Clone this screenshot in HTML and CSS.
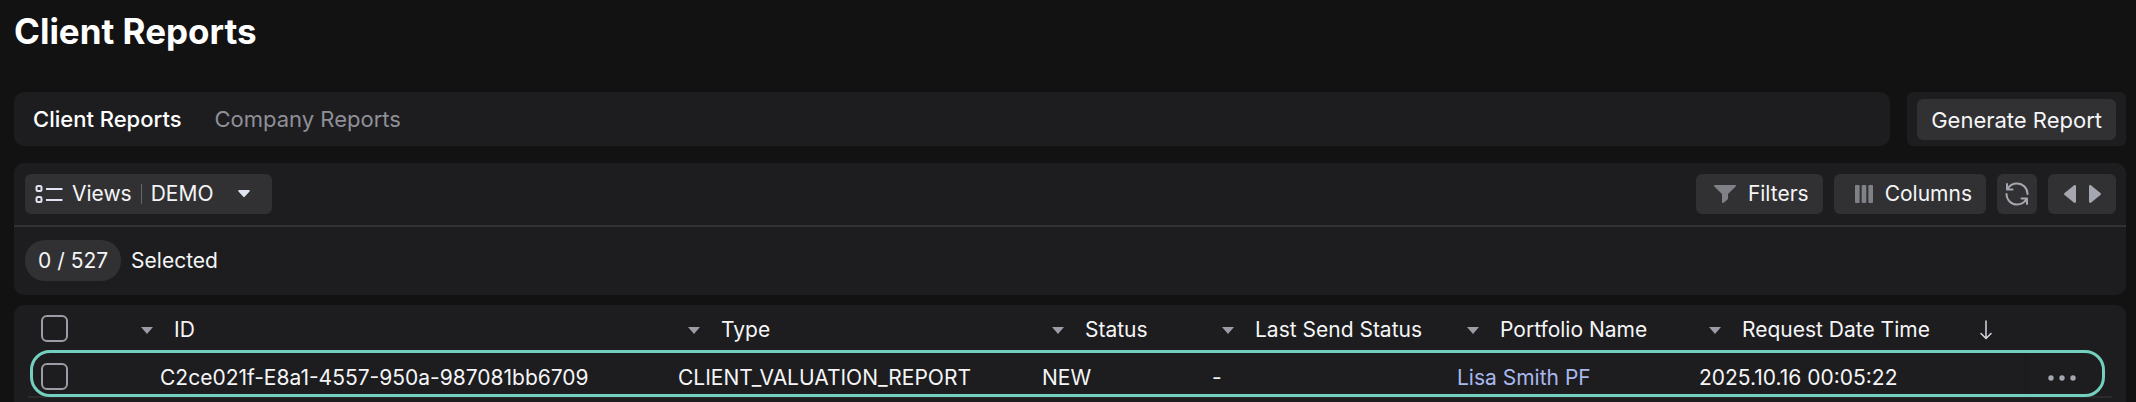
FILE: index.html
```html
<!DOCTYPE html>
<html lang="en">
<head>
  <meta charset="UTF-8">
  <meta name="viewport" content="width=device-width, initial-scale=1.0">
  <title>Client Reports</title>
  <link rel="stylesheet" href="styles.css">
</head>
<body>
  <h1 class="page-title">Client Reports</h1>

  <div class="top-row">
    <nav class="panel tabs">
      <a class="tab active" href="#client">Client Reports</a>
      <a class="tab" href="#company">Company Reports</a>
    </nav>
    <div class="panel generate">
      <button class="btn" type="button">Generate Report</button>
    </div>
  </div>

  <section class="panel controls">
    <div class="toolbar">
      <button class="btn views" type="button">
        <svg class="views-icon" width="28" height="20" viewBox="0 0 28 20" fill="none" stroke="currentColor" stroke-width="2">
          <rect x="1.500" y="2" width="5" height="5" rx="1.500"/>
          <rect x="1.500" y="13" width="5" height="5" rx="1.500"/>
          <path d="M11 5h16.500M11 16h16.500"/>
        </svg>
        <span>Views</span>
        <span class="separator"></span>
        <span>DEMO</span>
        <svg class="views-caret" width="12" height="8" viewBox="0 0 12 8"><path d="M1.2 0h9.6c.9 0 1.3 1 .7 1.600L6.900 6.500a1.200 1.200 0 0 1-1.800 0L.5 1.600C-.1 1 .3 0 1.200 0z" fill="currentColor"/></svg>
      </button>
      <div class="actions">
        <button class="btn filters" type="button">
          <svg width="22" height="18" viewBox="0 0 22 18"><path d="M1 0h20c.9 0 1.300 1 .7 1.600L14 9v4.500c0 .4-.2.700-.5 1l-3.800 3.200c-.6.500-1.700.2-1.700-.7V9L.3 1.600C-.3 1 .1 0 1 0z" fill="currentColor"/></svg>
          <span>Filters</span>
        </button>
        <button class="btn columns" type="button">
          <svg width="18" height="18" viewBox="0 0 18 18" fill="currentColor"><rect width="4.600" height="18" rx="1"/><rect x="6.700" width="4.600" height="18" rx="1"/><rect x="13.400" width="4.600" height="18" rx="1"/></svg>
          <span>Columns</span>
        </button>
        <button class="btn refresh" type="button" aria-label="Refresh">
          <svg width="24" height="24" viewBox="0 0 24 24" fill="none" stroke="currentColor" stroke-width="2" stroke-linecap="round" stroke-linejoin="round">
            <path d="M2 2v5.500h5.500M2.500 7C4.500 3.600 8 1.500 12 1.500c5.800 0 10.500 4.700 10.500 10.500"/>
            <path d="M22 22v-5.500h-5.500M21.500 17c-2 3.400-5.500 5.500-9.500 5.500C6.200 22.500 1.500 17.800 1.500 12"/>
          </svg>
        </button>
        <div class="btn pager">
          <button class="pager-btn" type="button" aria-label="Previous">
            <svg width="12" height="18" viewBox="0 0 12 18"><path d="M12 1.500v15c0 1.300-1.300 1.900-2.200 1L.6 10a1.300 1.300 0 0 1 0-2L9.800.500c.9-.9 2.200-.3 2.200 1z" fill="currentColor"/></svg>
          </button>
          <button class="pager-btn" type="button" aria-label="Next">
            <svg width="12" height="18" viewBox="0 0 12 18"><path d="M0 1.500v15c0 1.300 1.300 1.900 2.200 1L11.400 10a1.300 1.300 0 0 0 0-2L2.200.500C1.300-.400 0 .200 0 1.500z" fill="currentColor"/></svg>
          </button>
        </div>
      </div>
    </div>
    <div class="selection">
      <span class="count">0 / 527</span>
      <span>Selected</span>
    </div>
  </section>

  <section class="panel reports">
    <table class="report-table">
      <colgroup>
        <col class="col-select">
        <col class="col-id">
        <col class="col-type">
        <col class="col-status">
        <col class="col-last">
        <col class="col-portfolio">
        <col class="col-date">
        <col class="col-actions">
      </colgroup>
      <thead>
        <tr>
          <th class="select"><input class="check" type="checkbox" aria-label="Select all"></th>
          <th><div class="head"><span class="caret"></span>ID</div></th>
          <th><div class="head"><span class="caret"></span>Type</div></th>
          <th><div class="head"><span class="caret"></span>Status</div></th>
          <th><div class="head"><span class="caret"></span>Last Send Status</div></th>
          <th><div class="head"><span class="caret"></span>Portfolio Name</div></th>
          <th>
            <div class="head">
              <span class="caret"></span>Request Date Time
              <svg class="sort" width="12" height="20" viewBox="0 0 12 20" fill="none" stroke="currentColor" stroke-width="1.500" stroke-linecap="round" stroke-linejoin="round"><path d="M6 1v17M1 13.500l5 5 5-5"/></svg>
            </div>
          </th>
          <th></th>
        </tr>
      </thead>
      <tbody>
        <tr class="highlighted">
          <td class="select"><input class="check" type="checkbox" aria-label="Select report"></td>
          <td class="id">C2ce021f-E8a1-4557-950a-987081bb6709</td>
          <td>CLIENT_VALUATION_REPORT</td>
          <td>NEW</td>
          <td>-</td>
          <td><a class="portfolio" href="#portfolio">Lisa Smith PF</a></td>
          <td>2025.10.16 00:05:22</td>
          <td class="more">
            <button class="more-btn" type="button" aria-label="More actions">
              <svg width="28" height="6" viewBox="0 0 28 6" fill="currentColor"><circle cx="3" cy="3" r="2.700"/><circle cx="14" cy="3" r="2.700"/><circle cx="25" cy="3" r="2.700"/></svg>
            </button>
          </td>
        </tr>
      </tbody>
    </table>
  </section>
</body>
</html>
```
FILE: styles.css
```css
* {
  box-sizing: border-box;
}
body {
  background-color: #121212;
  color: #f5f5f7;
  font-family: Inter, 'Liberation Sans', sans-serif;
  font-size: 21px;
  line-height: 26px;
  display: flex;
  flex-direction: column;
  min-height: 100vh;
  margin: 0;
  padding: 0 10px 0 14px;
}
button {
  font: inherit;
  color: inherit;
  border: none;
  cursor: pointer;
}
svg {
  display: block;
  flex: none;
}
.panel {
  background-color: #1d1d1f;
  border-radius: 10px;
}
.page-title {
  margin: 0;
  padding: 11px 0 41px;
  font-size: 35px;
  line-height: 40px;
  font-weight: 700;
  color: #fff;
}
.top-row {
  display: flex;
  gap: 17px;
  font-size: 22px;
}
.tabs {
  flex: 1;
  display: flex;
  align-items: center;
  gap: 33px;
  padding: 0 19px;
}
.tab {
  color: #8f9097;
  text-decoration: none;
}
.tab.active {
  color: #fff;
  font-weight: 500;
}
.generate {
  padding: 7px 10px 6px;
  border-radius: 6px;
}
.btn {
  display: flex;
  align-items: center;
  height: 40px;
  padding: 0 14px;
  background-color: #313133;
  border-radius: 6px;
}
.generate .btn {
  height: 41px;
}
.controls {
  margin-top: 17px;
}
.toolbar {
  display: flex;
  justify-content: space-between;
  padding: 11px 10px 11px 11px;
  border-bottom: 2px solid #323234;
}
.views {
  gap: 9px;
  padding: 0 22px 0 10px;
}
.views-icon,
.views-caret {
  color: #e0e3f2;
}
.views-caret {
  margin-left: 15px;
}
.separator {
  width: 1px;
  height: 20px;
  background-color: #67676b;
}
.actions {
  display: flex;
  gap: 11px;
}
.filters,
.columns {
  gap: 12px;
}
.filters {
  padding-left: 18px;
}
.columns {
  padding-left: 21px;
}
.filters svg,
.columns svg {
  color: #808187;
}
.refresh {
  padding: 0 8px;
  color: #a4a6b0;
}
.pager {
  gap: 13px;
  padding: 0 15px 0 16px;
}
.pager-btn {
  padding: 0;
  background: none;
  color: #a4a6b0;
}
.selection {
  display: flex;
  align-items: center;
  gap: 10px;
  padding: 13px 11px 14px;
}
.count {
  padding: 8px 13px 7px;
  background-color: #313133;
  border-radius: 20px;
}
.reports {
  flex: 1;
  margin-top: 10px;
  padding: 0 14px;
  border-radius: 10px 10px 0 0;
}
.report-table {
  width: 100%;
  table-layout: fixed;
  border-collapse: separate;
  border-spacing: 0;
}
.col-select {
  width: 103px;
}
.col-type {
  width: 364px;
}
.col-status {
  width: 170px;
}
.col-last {
  width: 245px;
}
.col-portfolio {
  width: 242px;
}
.col-date {
  width: 326px;
}
.col-actions {
  width: 87px;
}
th,
td {
  padding: 0;
  text-align: left;
  font-weight: 400;
  white-space: nowrap;
}
th {
  height: 44px;
  padding-top: 6px;
}
td {
  height: 49px;
  padding-top: 10px;
  border-bottom: 2px solid #2b2b2d;
}
td.id {
  padding-left: 29px;
}
.select {
  padding-left: 13px;
}
th.select {
  padding-top: 3px;
}
td.select {
  padding-top: 8px;
}
.head {
  display: flex;
  align-items: center;
  padding-left: 10px;
}
.caret {
  margin-right: 21px;
  border: 6px solid transparent;
  border-top: 7px solid #9b9ca5;
  border-bottom: 0;
}
.sort {
  margin-left: 50px;
  color: #d5d7e2;
}
.check {
  appearance: none;
  display: block;
  width: 27px;
  height: 27px;
  margin: 0;
  border: 2px solid #9b9ca5;
  border-radius: 6px;
}
.check:checked {
  background-color: #74cfbf;
}
.highlighted {
  position: relative;
}
/* ring drawn over the row */
.highlighted .select::after {
  content: "";
  position: absolute;
  top: 1px;
  right: 7px;
  bottom: 1px;
  left: 2px;
  border: 3px solid #74cfbf;
  border-radius: 20px;
  pointer-events: none;
}
.portfolio {
  color: #a9b8ee;
  text-decoration: none;
}
.more {
  border-left: 1px solid #19191b;
}
.more-btn {
  display: block;
  margin-left: 22px;
  padding: 10px 0;
  background: none;
  color: #a4a6b0;
}
```
